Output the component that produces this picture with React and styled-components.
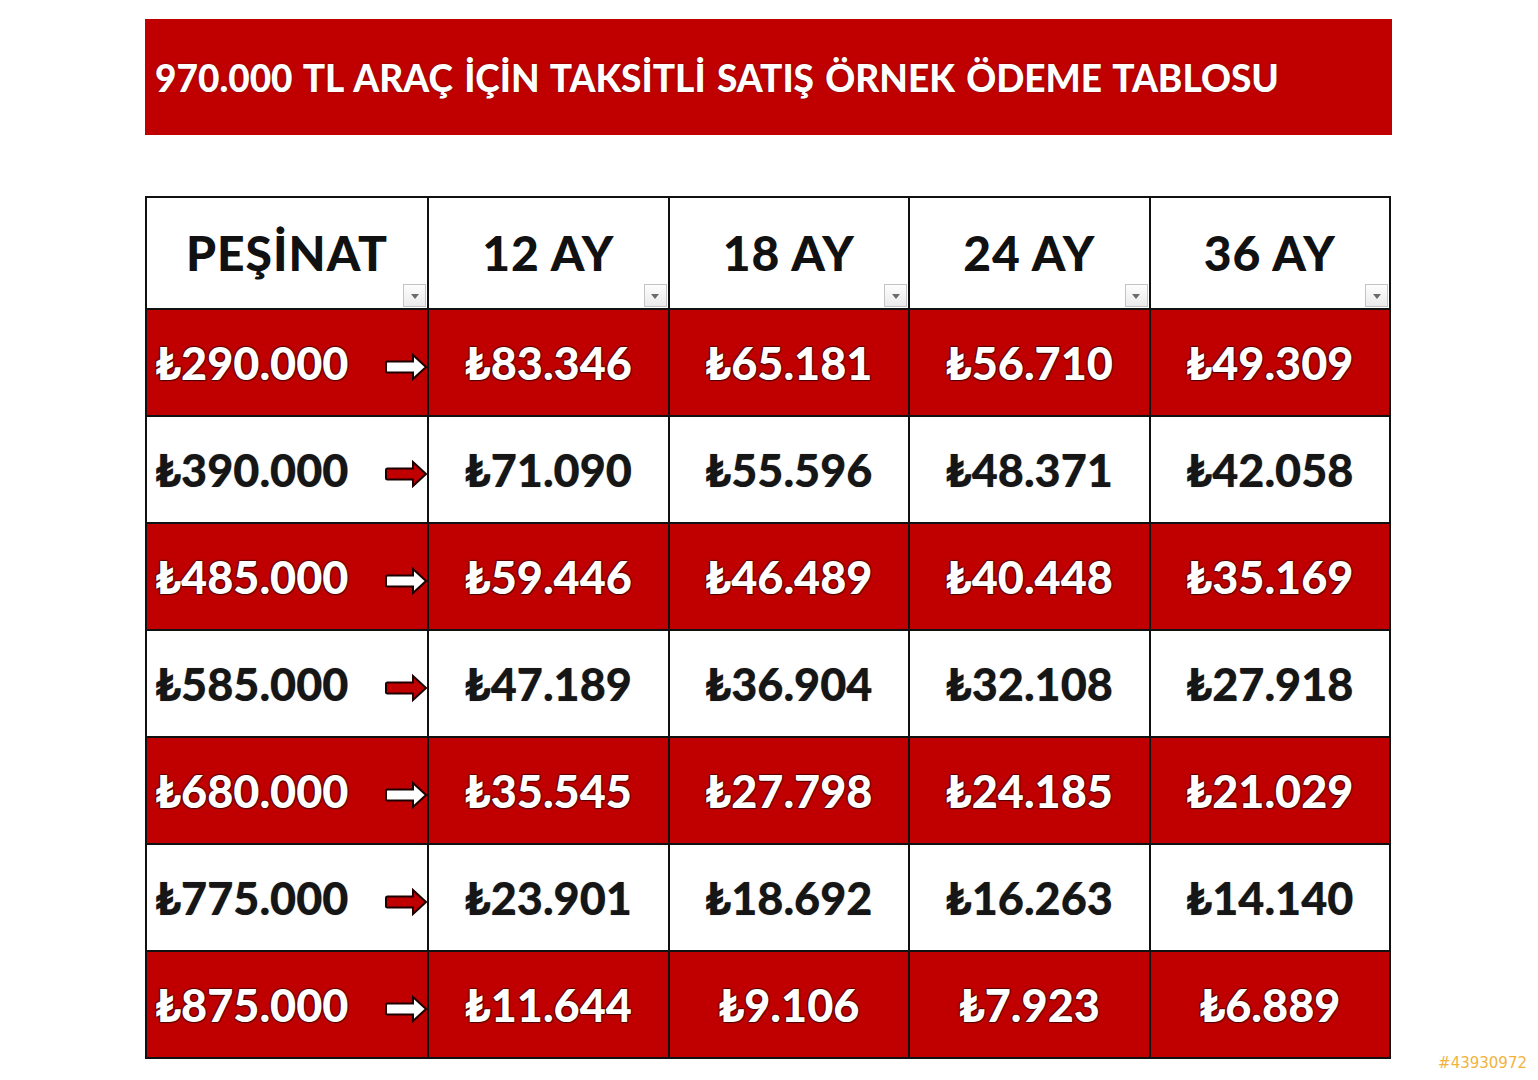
import React from "react";
import styled, { createGlobalStyle } from "styled-components";

const Global = createGlobalStyle`
  html, body { margin: 0; padding: 0; background: #fff; }
  body { font-family: "Lato", "Noto Sans", "DejaVu Sans", sans-serif; }
`;

const RED = "#c00000";

const Page = styled.div`
  width: 1538px;
  height: 1080px;
  box-sizing: border-box;
  padding: 19px 0 0 145px;
  position: relative;
  overflow: hidden;
`;

const TitleBar = styled.div`
  width: 1247px;
  height: 116px;
  background: ${RED};
  display: flex;
  align-items: center;
  padding-left: 10px;
  box-sizing: border-box;
`;

const Title = styled.h1`
  margin: 0;
  color: #fff;
  font-family: "Lato", "Noto Sans", sans-serif;
  font-weight: 900;
  font-size: 37px;
  word-spacing: 2.5px;
  white-space: nowrap;
  text-shadow: 0 0 2px rgba(60, 0, 0, 0.7);
`;

const Grid = styled.div`
  margin-top: 61px;
  width: 1246px;
  box-sizing: border-box;
  display: grid;
  grid-template-columns: 280px repeat(4, 1fr);
  grid-template-rows: 110px repeat(7, 105px);
  gap: 2px;
  background: #111;
  border: 2px solid #111;
`;

const HeadCell = styled.div`
  position: relative;
  background: #fff;
  display: flex;
  align-items: center;
  justify-content: center;
  padding-bottom: 2px;
  font-family: "Lato", "Noto Sans", sans-serif;
  font-weight: 900;
  font-size: 48px;
  color: #111;
  letter-spacing: 1px;
`;

const Drop = styled.span`
  position: absolute;
  right: 1px;
  bottom: 1px;
  width: 23px;
  height: 23px;
  box-sizing: border-box;
  border: 1px solid #c4c4c4;
  background: linear-gradient(#fdfdfd, #ebebeb);
  display: flex;
  align-items: center;
  justify-content: center;
  &::after {
    content: "";
    border-left: 4px solid transparent;
    border-right: 4px solid transparent;
    border-top: 5px solid #6a6a6a;
    margin-top: 2px;
  }
`;

const Cell = styled.div`
  background: ${(p) => (p.$red ? RED : "#fff")};
  color: ${(p) => (p.$red ? "#fff" : "#161616")};
  display: flex;
  align-items: center;
  justify-content: ${(p) => (p.$first ? "space-between" : "center")};
  padding-left: ${(p) => (p.$first ? "8px" : "0")};
  font-family: "Lato", "Noto Sans", sans-serif;
  font-weight: 900;
  font-size: 45px;
  white-space: nowrap;
  text-shadow: ${(p) =>
    p.$red
      ? "1px 1px 1px rgba(70,0,0,0.8), -1px -1px 1px rgba(70,0,0,0.6), 1px -1px 1px rgba(70,0,0,0.6), -1px 1px 1px rgba(70,0,0,0.6)"
      : "0 0 1px rgba(0,0,0,0.4)"};
`;

const ArrowSvg = styled.svg`
  flex: none;
  margin-top: 8px;
`;

const Arrow = ({ red }) => (
  <ArrowSvg width="42" height="28" viewBox="0 0 42 28">
    <path
      d="M2.5 8.5 H28 V2 L41 14 L28 26 V19.5 H2.5 Q1 19.5 1 18 V10 Q1 8.5 2.5 8.5 Z"
      fill={red ? "#fff" : "#c00000"}
      stroke="#1e0000"
      strokeWidth="2"
      strokeLinejoin="miter"
    />
  </ArrowSvg>
);

const Watermark = styled.div`
  position: absolute;
  right: 11px;
  bottom: 8px;
  color: #f0b43c;
  font-family: "DejaVu Sans", sans-serif;
  font-size: 15px;
`;

const heads = ["PEŞİNAT", "12 AY", "18 AY", "24 AY", "36 AY"];

const rows = [
  ["₺290.000", "₺83.346", "₺65.181", "₺56.710", "₺49.309"],
  ["₺390.000", "₺71.090", "₺55.596", "₺48.371", "₺42.058"],
  ["₺485.000", "₺59.446", "₺46.489", "₺40.448", "₺35.169"],
  ["₺585.000", "₺47.189", "₺36.904", "₺32.108", "₺27.918"],
  ["₺680.000", "₺35.545", "₺27.798", "₺24.185", "₺21.029"],
  ["₺775.000", "₺23.901", "₺18.692", "₺16.263", "₺14.140"],
  ["₺875.000", "₺11.644", "₺9.106", "₺7.923", "₺6.889"],
];

export default function App() {
  return (
    <Page>
      <Global />
      <TitleBar>
        <Title>970.000 TL ARAÇ İÇİN TAKSİTLİ SATIŞ ÖRNEK ÖDEME TABLOSU</Title>
      </TitleBar>
      <Grid>
        {heads.map((h) => (
          <HeadCell key={h}>
            {h}
            <Drop />
          </HeadCell>
        ))}
        {rows.map((r, i) => {
          const red = i % 2 === 0;
          return r.map((v, j) => (
            <Cell key={i + "-" + j} $red={red} $first={j === 0}>
              {j === 0 ? (
                <>
                  <span>{v}</span>
                  <Arrow red={red} />
                </>
              ) : (
                v
              )}
            </Cell>
          ));
        })}
      </Grid>
      <Watermark>#43930972</Watermark>
    </Page>
  );
}
